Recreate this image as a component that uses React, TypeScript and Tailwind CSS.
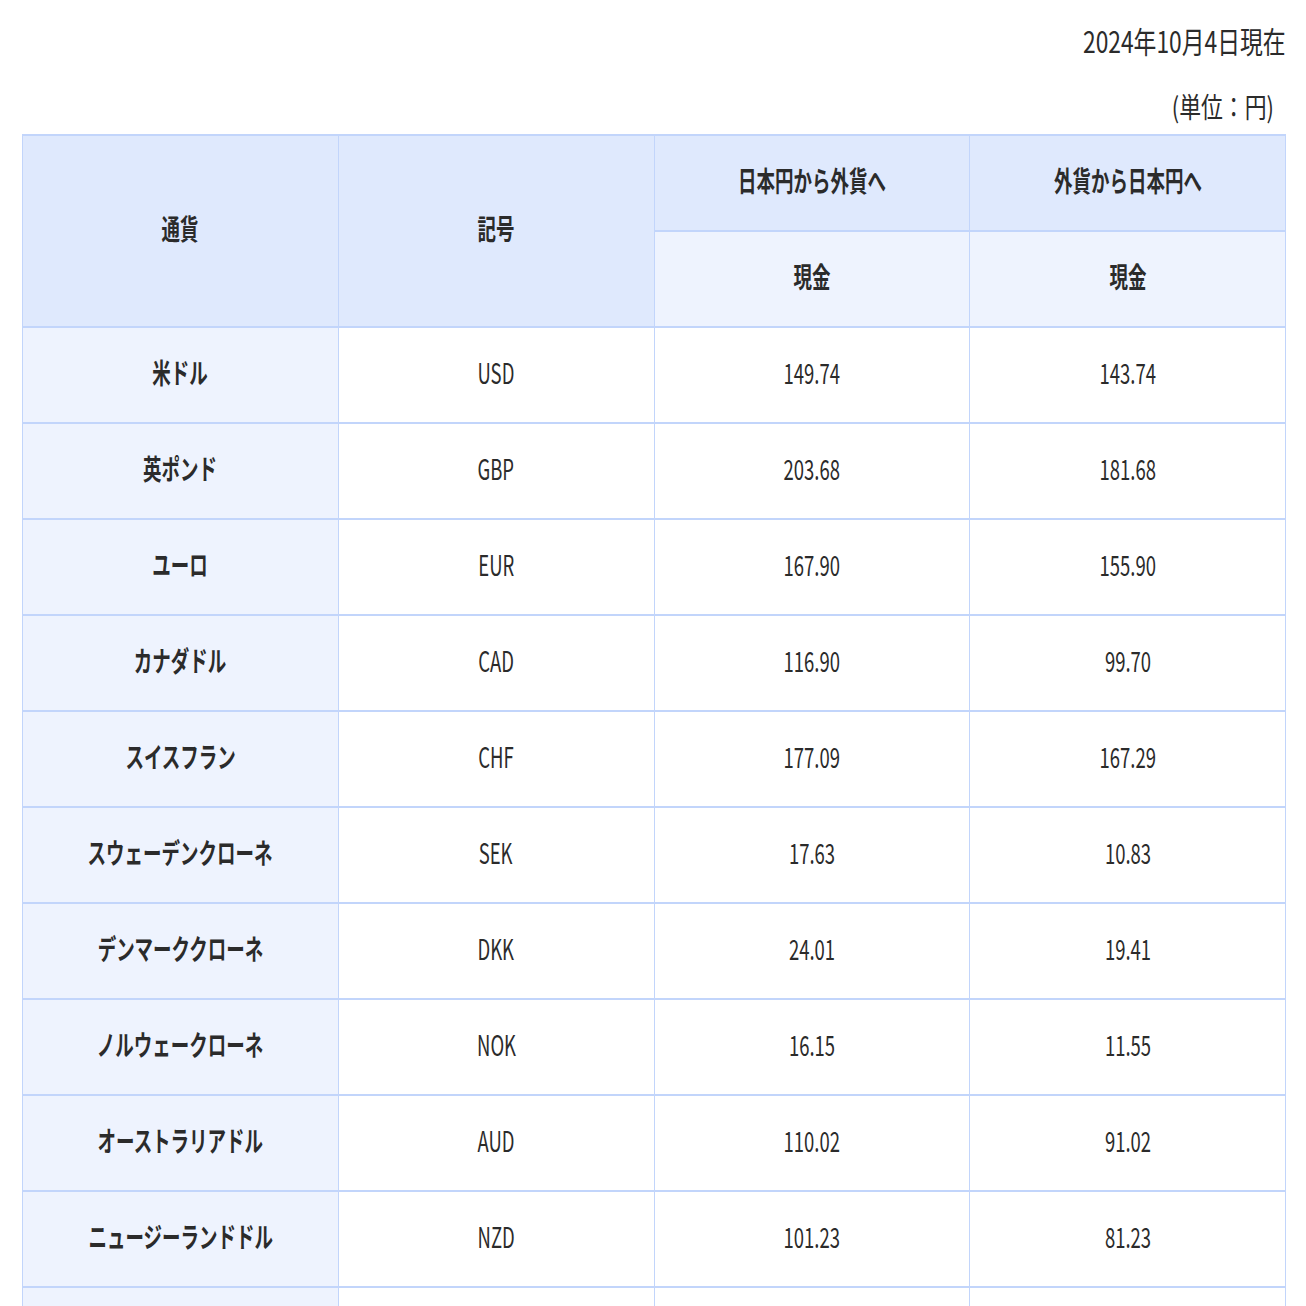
const rows: [string, string, string, string][] = [
  ["米ドル", "USD", "149.74", "143.74"],
  ["英ポンド", "GBP", "203.68", "181.68"],
  ["ユーロ", "EUR", "167.90", "155.90"],
  ["カナダドル", "CAD", "116.90", "99.70"],
  ["スイスフラン", "CHF", "177.09", "167.29"],
  ["スウェーデンクローネ", "SEK", "17.63", "10.83"],
  ["デンマーククローネ", "DKK", "24.01", "19.41"],
  ["ノルウェークローネ", "NOK", "16.15", "11.55"],
  ["オーストラリアドル", "AUD", "110.02", "91.02"],
  ["ニュージーランドドル", "NZD", "101.23", "81.23"],
  ["", "", "", ""],
];

// condensed look: the source font is narrow, so squeeze horizontally
function Narrow({ children, bold }: { children: React.ReactNode; bold?: boolean }) {
  return (
    <span
      className={
        "inline-block scale-x-[0.66] whitespace-nowrap text-[28px] leading-none text-[#2b2b2b] " +
        (bold ? "font-bold" : "font-normal")
      }
    >
      {children}
    </span>
  );
}

function Cell({
  children,
  bg,
  bold,
  className = "",
}: {
  children?: React.ReactNode;
  bg: string;
  bold?: boolean;
  className?: string;
}) {
  return (
    <div className={`flex items-center justify-center pb-[6px] ${bg} ${className}`}>
      {children ? <Narrow bold={bold}>{children}</Narrow> : null}
    </div>
  );
}

export default function App() {
  return (
    <div
      className="h-[1306px] overflow-hidden bg-white pl-[22px] pr-[20px]"
      style={{ fontFamily: '"Noto Sans CJK JP", "Noto Sans", sans-serif' }}
    >
      {/* date + unit */}
      <div className="flex h-[84px] items-center justify-end pb-[5px]">
        <span className="inline-block origin-right scale-x-[0.76] whitespace-nowrap text-[30px] leading-none text-[#2b2b2b]">
          2024年10月4日現在
        </span>
      </div>
      <div className="flex h-[46px] items-center justify-end pr-[12px] pb-[2px]">
        <span className="inline-block origin-right scale-x-[0.78] whitespace-nowrap text-[28px] leading-none text-[#2b2b2b]">
          (単位：円)
        </span>
      </div>

      {/* rate table */}
      <div className="mt-[4px] grid grid-cols-4 gap-x-px gap-y-[2px] bg-[#c2d5fb] px-px pt-[2px] [grid-auto-rows:94px]">
        <Cell bg="bg-[#dfe9fd]" bold className="row-span-2">
          通貨
        </Cell>
        <Cell bg="bg-[#dfe9fd]" bold className="row-span-2">
          記号
        </Cell>
        <Cell bg="bg-[#dfe9fd]" bold>
          日本円から外貨へ
        </Cell>
        <Cell bg="bg-[#dfe9fd]" bold>
          外貨から日本円へ
        </Cell>
        <Cell bg="bg-[#eef3fe]" bold>
          現金
        </Cell>
        <Cell bg="bg-[#eef3fe]" bold>
          現金
        </Cell>

        {rows.map((r, i) => (
          <div key={i} className="contents">
            <Cell bg="bg-[#eef3fe]" bold>
              {r[0]}
            </Cell>
            <Cell bg="bg-white">{r[1]}</Cell>
            <Cell bg="bg-white">{r[2]}</Cell>
            <Cell bg="bg-white">{r[3]}</Cell>
          </div>
        ))}
      </div>
    </div>
  );
}
